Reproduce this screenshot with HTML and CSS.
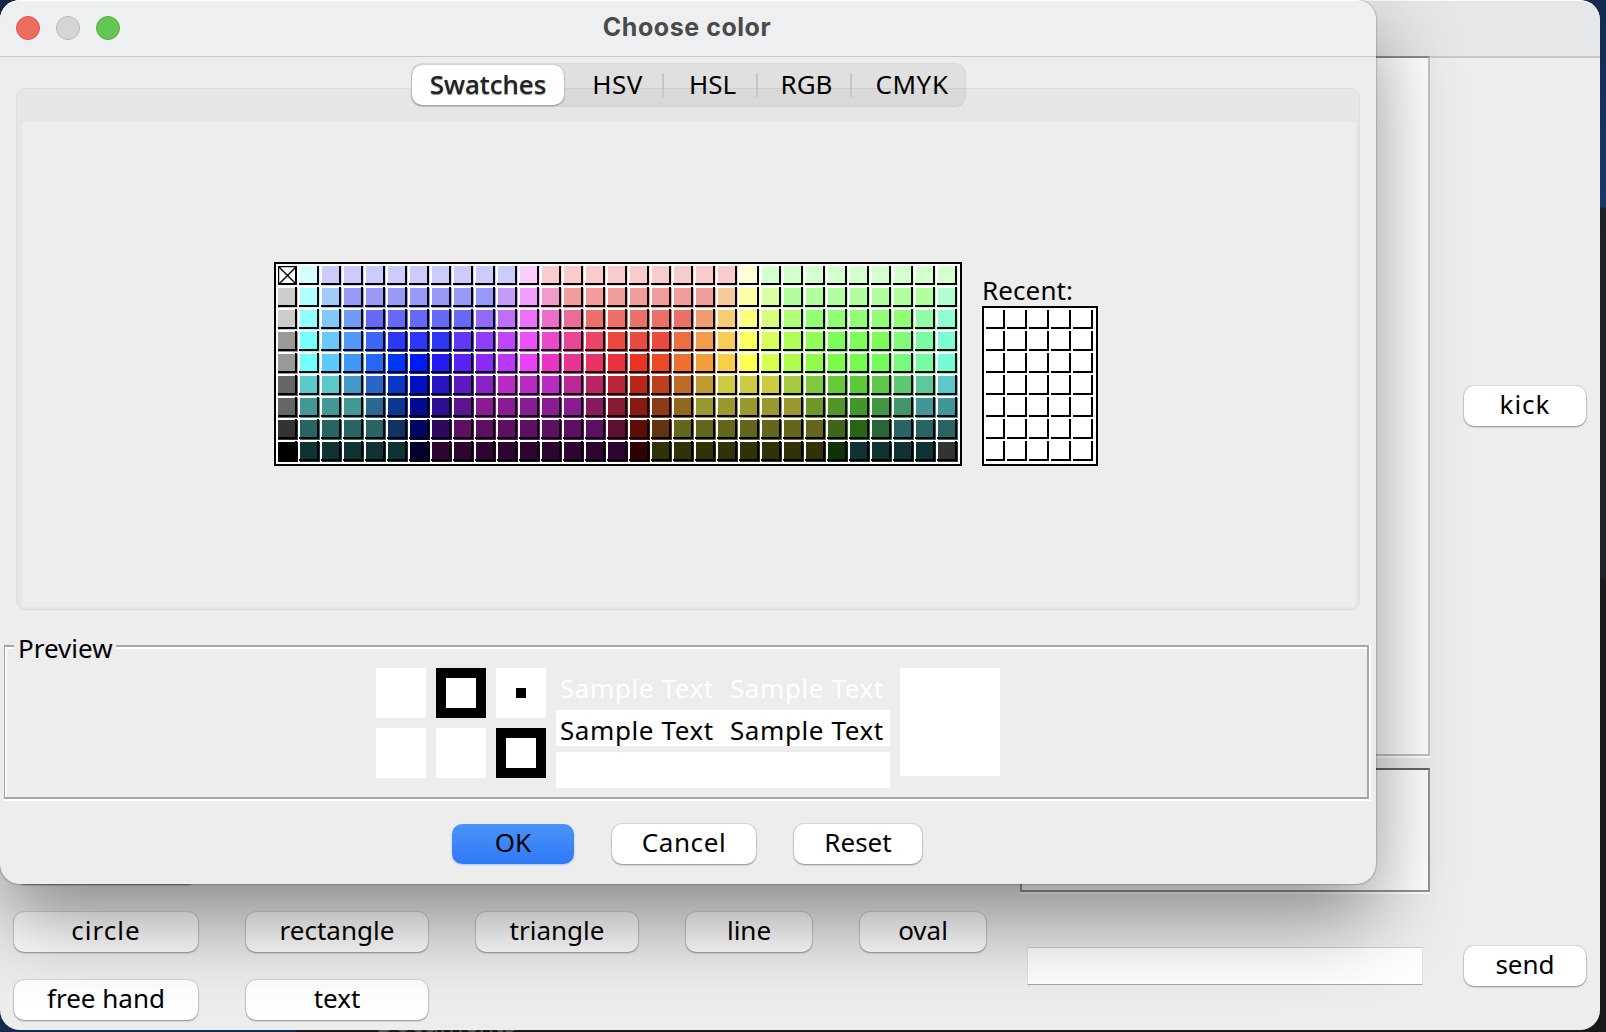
FILE: index.html
```html
<!DOCTYPE html>
<html lang="en">
<head>
<meta charset="utf-8">
<title>Choose color</title>
<link rel="stylesheet" href="styles.css">
</head>
<body>
<div class="desktop">
  <div class="dock-strip"><span>Documents</span></div>

  <section class="window board">
    <header class="titlebar"></header>
    <div class="board-body">
      <div class="tools">
        <div class="tool-row"><div class="btn w184"></div></div>
        <div class="tool-row">
          <button class="btn w184 wide">circle</button>
          <button class="btn w182">rectangle</button>
          <button class="btn w162">triangle</button>
          <button class="btn w126">line</button>
          <button class="btn w126">oval</button>
        </div>
        <div class="tool-row">
          <button class="btn w184">free hand</button>
          <button class="btn w182">text</button>
        </div>
      </div>
      <div class="chat">
        <div class="pane users"></div>
        <div class="pane log"></div>
        <div class="field"></div>
      </div>
      <div class="actions">
        <button class="btn w122 wide">kick</button>
        <button class="btn w122">send</button>
      </div>
    </div>
  </section>

  <section class="window dialog">
    <header class="titlebar">
      <div class="lights"><i class="red"></i><i class="gray"></i><i class="green"></i></div>
      <h1>Choose color</h1>
    </header>
    <div class="tabpane">
      <nav class="tabs">
        <span class="tab active"><b>Swatches</b></span>
        <span class="tab t-hsv">HSV</span>
        <span class="tab t-hsl">HSL</span>
        <span class="tab t-rgb">RGB</span>
        <span class="tab t-cmyk">CMYK</span>
      </nav>
      <div class="chooser">
        <div class="frame"><div class="grid main" id="main"></div></div>
        <div class="recent">
          <span class="recent-label">Recent:</span>
          <div class="frame"><div class="grid small" id="recent"></div></div>
        </div>
      </div>
    </div>
    <fieldset class="preview">
      <legend>Preview</legend>
      <div class="preview-row">
        <div class="squares">
          <i></i><i class="ring"></i><i class="dot"></i>
          <i></i><i></i><i class="ring"></i>
        </div>
        <div class="samples">
          <p class="light"><span>Sample Text</span><span>Sample Text</span></p>
          <p class="dark"><span>Sample Text</span><span>Sample Text</span></p>
          <p class="blank"></p>
        </div>
        <div class="big"></div>
      </div>
    </fieldset>
    <footer class="buttons">
      <button class="btn primary w122">OK</button>
      <button class="btn w144 spaced">Cancel</button>
      <button class="btn w128">Reset</button>
    </footer>
  </section>
</div>
<script src="swatches.js"></script>
</body>
</html>
```
FILE: styles.css
```css
* { box-sizing: border-box; }

body {
  margin: 0;
  font: 26px/36px "Noto Sans", sans-serif;
  color: #000;
}

.desktop {
  position: relative;
  width: 1606px;
  height: 1032px;
  overflow: hidden;
  background: linear-gradient(#142a50 0, #1b3767 207px, #1d2229 208px, #20242c 578px, #1b1b1d 580px);
}

.dock-strip {
  position: absolute;
  left: 0;
  bottom: 0;
  width: 1600px;
  height: 28px;
  overflow: hidden;
  padding-left: 376px;
  background: linear-gradient(90deg, #14294e 296px, #19191b 297px);
  font-size: 26px;
  line-height: 36px;
  color: #555;
}

.window {
  position: absolute;
  left: 0;
  top: 0;
  border-radius: 20px;
  background: #ededed;
}

.titlebar {
  height: 56px;
  border-radius: 20px 20px 0 0;
  border-top: 1px solid #fafbfc;
}

/* Drawing board window */
.board { width: 1600px; height: 1030px; overflow: hidden; }
.board .titlebar { background: #e6e7e9; }

.board-body {
  display: grid;
  grid-template-columns: 1020px 410px 170px;
  height: 974px;
}

.tools {
  display: flex;
  flex-direction: column;
  justify-content: flex-end;
  gap: 28px;
  padding: 0 0 10px 14px;
}
.tool-row { display: flex; gap: 48px; }

.chat { display: flex; flex-direction: column; }
.pane {
  background: #fff;
  border: 2px solid #949494;
  border-top-color: #666;
}
.users { height: 700px; border-color: #8c8888 #c4c4c4 #c4c4c4; box-shadow: 0 2px #fff; }
.log { height: 124px; margin-top: 12px; box-shadow: 0 2px #fff; }
.field {
  height: 38px;
  margin: 55px 7px 0;
  background: #fff;
  border: 1px solid #e2e2e2;
  border-top-color: #ccc;
  border-bottom-color: #a8a8a8;
}

.actions {
  display: flex;
  flex-direction: column;
  justify-content: space-between;
  padding: 328px 14px 44px 34px;
  border-top: 2px solid #cacaca;
}

.btn {
  height: 40px;
  padding: 0 0 4px;
  border: 0;
  border-radius: 10px;
  background: #fff;
  box-shadow: 0 0 0 1px rgba(0,0,0,.08), 0 1px 2px rgba(0,0,0,.35);
  font: 26px/36px "Noto Sans", sans-serif;
  color: #000;
}
.w184 { width: 184px; }
.w182 { width: 182px; }
.w162 { width: 162px; }
.w144 { width: 144px; }
.w128 { width: 128px; }
.w126 { width: 126px; }
.w122 { width: 122px; }
.wide { letter-spacing: 1px; }
.spaced { letter-spacing: .6px; }

/* Color chooser dialog */
.dialog {
  width: 1376px;
  height: 884px;
  box-shadow: 0 0 2px rgba(0,0,0,.55), 0 34px 84px rgba(0,0,0,.43);
}
.dialog .titlebar {
  display: grid;
  grid-template-columns: 160px 1fr 160px;
  align-items: center;
  height: 57px;
  padding-bottom: 2px;
  border-bottom: 1px solid #c8c8c8;
  background: #eeeff1;
}
.lights { display: flex; gap: 16px; padding-left: 16px; }
.lights i { width: 24px; height: 24px; border-radius: 50%; border: 1px solid; }
.lights .red { background: #ed6b5f; border-color: #d9574b; }
.lights .gray { background: #d4d5d7; border-color: #b7b8ba; }
.lights .green { background: #62c655; border-color: #51ad43; }
h1 {
  margin: 0 2px 2px 0;
  font: 700 25px/30px Inter, sans-serif;
  letter-spacing: .55px;
  text-align: center;
  color: #4a4a4a;
}

.tabpane {
  height: 522px;
  margin: 31px 16px 0;
  border: 1px solid #dcdcdc;
  border-radius: 10px;
  background: linear-gradient(#ededed, #ededed) 5px 33px / 1334px 485px no-repeat, #e6e6e6;
}
.tabs {
  display: flex;
  width: 555px;
  height: 44px;
  margin: -26px 0 0 394px;
  padding: 2px 1px;
  border-radius: 11px;
  background: rgba(0,0,0,.055);
  box-shadow: inset 0 0 0 1px rgba(0,0,0,.035);
  line-height: 39px;
}
.tab { text-align: center; }
.tab b { font-weight: 500; }
.active {
  width: 152px;
  border-radius: 10px;
  background: #fff;
  color: #222;
  text-shadow: 0 1px 1px rgba(0,0,0,.45);
  box-shadow: 0 0 1px rgba(0,0,0,.4), 0 1px 2px rgba(0,0,0,.3);
}
.t-hsv { width: 100px; padding-left: 7px; letter-spacing: .4px; }
.t-hsl, .t-rgb { width: 94px; padding-left: 3px; }
.t-cmyk { width: 113px; padding-left: 7px; letter-spacing: .6px; }
.t-hsv, .t-hsl, .t-rgb {
  background: linear-gradient(#c6c6c6, #c6c6c6) 100% 8px / 2px 24px no-repeat;
}

.chooser {
  display: flex;
  align-items: flex-end;
  gap: 20px;
  height: 204px;
  margin: 155px 0 0 257px;
}
.frame { padding: 2px; border: 2px solid #000; background: #fff; }
.grid { display: grid; gap: 2px; overflow: hidden; grid-auto-rows: 20px; }
.main { grid-template-columns: repeat(31, 20px); }
.small { grid-template-columns: repeat(5, 20px); }
.cell { position: relative; width: 20px; height: 20px; }
.cell::after {
  content: "";
  position: absolute;
  inset: -1px 1px 1px -1px;
  border: solid #000;
  border-width: 0 2px 2px 0;
}
.cell svg { display: block; }
.recent { display: flex; flex-direction: column; }
.recent-label { line-height: 36px; margin-bottom: -2px; letter-spacing: .1px; }

.preview {
  min-width: 0;
  height: 156px;
  margin: 35px 5px 0 4px;
  padding: 0;
  border: 0;
  background:
    linear-gradient(#a5a5a5, #a5a5a5) 0 0 / 10px 2px no-repeat,
    linear-gradient(#a5a5a5, #a5a5a5) 112px 0 / 1253px 2px no-repeat,
    linear-gradient(#a5a5a5, #a5a5a5) 0 152px / 1365px 2px no-repeat,
    linear-gradient(#a5a5a5, #a5a5a5) 0 0 / 1px 154px no-repeat,
    linear-gradient(#a5a5a5, #a5a5a5) 1363px 0 / 2px 154px no-repeat,
    linear-gradient(#fff, #fff) 1px 2px / 9px 2px no-repeat,
    linear-gradient(#fff, #fff) 112px 2px / 1251px 2px no-repeat,
    linear-gradient(#fff, #fff) 1px 2px / 2px 150px no-repeat,
    linear-gradient(#fff, #fff) 0 154px / 1367px 2px no-repeat,
    linear-gradient(#fff, #fff) 1365px 0 / 2px 156px no-repeat;
}
.preview legend {
  float: left;
  height: 36px;
  margin: -15px 0 0 14px;
  padding: 0;
}
.preview-row {
  display: flex;
  clear: both;
  gap: 10px;
  padding: 2px 0 0 372px;
}
.squares {
  display: grid;
  grid-template-columns: repeat(3, 50px);
  grid-auto-rows: 50px;
  gap: 10px;
}
.squares i { background: #fff; }
.squares .ring { border: 10px solid #000; }
.squares .dot { background: linear-gradient(#000, #000) 50% 50% / 10px 10px no-repeat, #fff; }
.samples {
  display: grid;
  grid-template: repeat(3, 36px) / 334px;
  gap: 6px;
}
.samples p {
  display: flex;
  gap: 16px;
  margin: 0;
  padding-left: 4px;
  line-height: 40px;
  letter-spacing: .6px;
  white-space: nowrap;
}
.samples span { width: 154px; height: 36px; }
.light { color: #fff; }
.dark, .blank { background: #fff; }
.big { width: 100px; height: 108px; background: #fff; }

.buttons { display: flex; gap: 38px; margin: 23px 0 0 452px; }
.primary {
  background: linear-gradient(#4a93f8, #2f79f6);
  box-shadow: 0 1px 2px rgba(47,121,246,.35);
}
```
FILE: swatches.js
```js
// Each row lists colors as "hex" or "hex*count" for a run of equal cells.
const rows = [
  "ffffff d5ffff ccccfa*9 f9cdfc f6cccd*9 fffdd6 d6ffd0*9",
  "cccccc b2ffff a1caf9 9999f8*7 c39cf8 f29cfb f19bca f29d9b*7 f6ca9c fffda4 dafea3 b2fe9f*7 b0fdd0",
  "cccccc 91ffff 81c8fb 7099f8 6668f6*5 9169f7 bf6cf7 ee70fa ec6dca ec6c98 ed6f69*5 f19c70 f6cd76 fffe7e d8fd7b b2fd79 93fd78*5 93fba5 91fcd2",
  "999999 78ffff 67cafb 5198f7 3c67f6 2d37f5*3 5f39f5 8f3ff6 bd47f7 eb50f9 ea48c8 ea4596 ea4467 eb4a41*3 ee6e43 f39c4d f8cd56 ffff60 d8fe5d b1fd5b 92fc5a 7efc59*3 80fb78 7efba5 7dfcd3",
  "999999 73ffff 5bcafb 3f98f8 2567f6 0036f8 001af5 251bf5 5a22f5 8b2bf6 bb36f7 ea3ef8 e935c6 e93495 e93365 ea323c ea3323 eb4a27 ed702e f29e38 f8ce46 ffff54 d7fd51 b0fc4e 91fb4c 7dfb4b 74fb4b 76fb5b 77fb7c 77fba5 73fcd4",
  "666666 5bc9c9*2 4397c8 2867c7 0b37c7 0011c4 2a14c4 5b1ac4 8b22c5 ba2bc6*3 ba2895 ba2665 ba2538 ba261a bc3f1e be6a28 c39933 cccb42*3 a5ca3f 82c93d 68c93b 5cc93b 5dc84c 5dc872 5dc89c 5bc9ca",
  "666666 429797*3 2a6795 0e3694 000b92 2d0d92 5c1493 8b1b93*5 8b1960 8a1a31 8b1910 8e3a16 92681f 99982f*5 70972b 52962a 439629 439642 43966b 429698*2",
  "333333 296464*4 113362 000561 2e0761 5d0f62*7 5c0f2f 5d0d06 60350f 65651b*7 406418 2a6416 2a6437 296465*3",
  "000000 103232*5 000130 2e0430*9 2e0200 323209*8 113108 103233*4 333333"
];

function addCell(grid, color) {
  const cell = document.createElement("div");
  cell.className = "cell";
  cell.style.background = color;
  grid.append(cell);
  return cell;
}

const main = document.getElementById("main");
for (const row of rows) {
  for (const run of row.split(" ")) {
    const [hex, count = 1] = run.split("*");
    for (let i = 0; i < count; i++) addCell(main, "#" + hex);
  }
}
main.firstChild.innerHTML =
  '<svg width="20" height="20" viewBox="0 0 20 20"><path d="M.5 19V.5H19M1 1l17 17M18 1L1 18" fill="none" stroke="#000" stroke-width="1.4"/></svg>';

const recent = document.getElementById("recent");
for (let i = 0; i < 35; i++) addCell(recent, "#fff");
```
